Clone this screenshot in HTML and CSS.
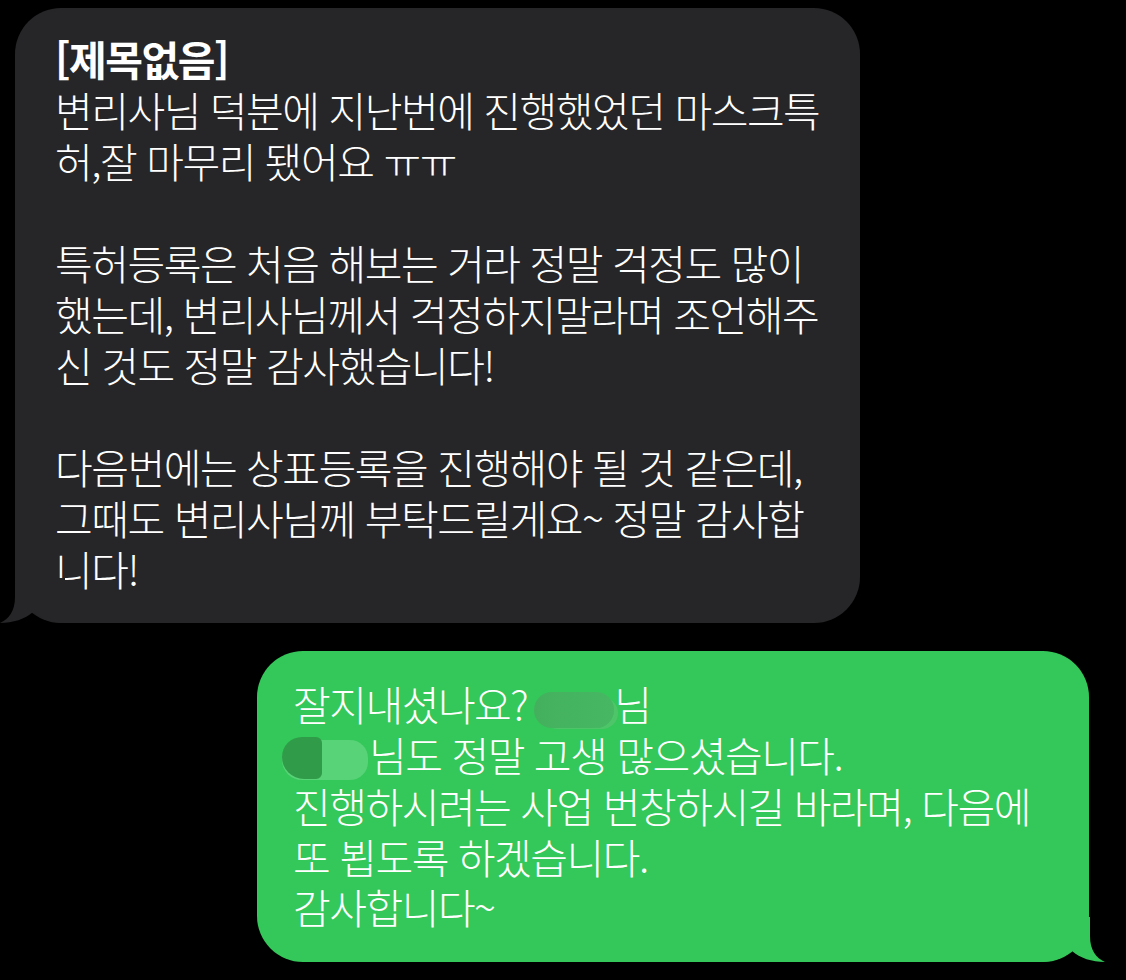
FILE: index.html
```html
<!DOCTYPE html>
<html lang="ko">
<head>
   <meta charset="UTF-8">
   <meta name="viewport" content="width=device-width, initial-scale=1.0">
   <title>메시지</title>
   <link rel="stylesheet" href="styles.css">
</head>

<body>
   <section class="chat">

      <div class="msg msg-in">
         <p class="text">
            <b class="subject">[제목없음]</b><br>
            변리사님 덕분에 지난번에 진행했었던 마스크특<br>
            허,잘 마무리 됐어요 ㅠㅠ<br>
            <br>
            특허등록은 처음 해보는 거라 정말 걱정도 많이<br>
            했는데, 변리사님께서 걱정하지말라며 조언해주<br>
            신 것도 정말 감사했습니다!<br>
            <br>
            다음번에는 상표등록을 진행해야 될 것 같은데,<br>
            그때도 변리사님께 부탁드릴게요~ 정말 감사합<br>
            니다!
         </p>
         <svg class="tail tail-in" viewBox="0 0 70 45" width="70" height="45">
            <path d="M15 0 L15 19 C15 33 9 41 0 45 C13 45 25 41 33 34 C42 41 52 45 65 45 L65 0 Z" />
         </svg>
      </div>

      <div class="msg msg-out">
         <p class="text">
            잘지내셨나요?<span class="blur blur-a"></span>님<br>
            <span class="blur blur-b"><i></i></span>님도 정말 고생 많으셨습니다.<br>
            진행하시려는 사업 번창하시길 바라며, 다음에<br>
            또 뵙도록 하겠습니다.<br>
            감사합니다~
         </p>
         <svg class="tail tail-out" viewBox="0 0 70 45" width="70" height="45">
            <path d="M55 0 L55 19 C55 33 61 41 70 45 C57 45 45 41 37 34 C28 41 18 45 5 45 L5 0 Z" />
         </svg>
      </div>

   </section>
</body>
</html>
```

FILE: styles.css
```css
* {
   box-sizing: border-box;
}

html,
body {
   margin: 0;
   padding: 0;
   background: #000;
}

body {
   font-family: 'Noto Sans CJK KR', 'Noto Sans', sans-serif;
   color: #fff;
}

.chat {
   display: flex;
   flex-direction: column;
   padding-top: 8px;
}

.msg {
   position: relative;
   border-radius: 46px;
}

.msg-in {
   background: #262628;
   width: 845px;
   margin-left: 15px;
   padding: 25px 20px 29px 40px;
}

.msg-out {
   background: #34c759;
   width: 832px;
   margin-left: 257px;
   margin-top: 28px;
   padding: 27px 20px 30px 36px;
}

.text {
   margin: 0;
   font-size: 41px;
   font-weight: 300;
   letter-spacing: -1.5px;
   white-space: nowrap;
}

.msg-in .text {
   line-height: 51px;
}

.msg-out .text {
   line-height: 50.5px;
}

.subject {
   font-weight: 700;
}

/* tails */
.tail {
   position: absolute;
   bottom: 0;
   display: block;
}

.tail-in {
   left: -15px;
   fill: #262628;
}

.tail-out {
   right: -16px;
   fill: #34c759;
}

/* blurred names */
.blur {
   display: inline-block;
   vertical-align: middle;
   border-radius: 18px;
}

.blur-a {
   width: 80px;
   height: 36px;
   margin: 0 0 0 7px;
   background: linear-gradient(90deg, #44b05e 0%, #45b460 45%, #48b763 100%);
   box-shadow: 6px 3px 0 -2px #4fc56a;
}

.blur-b {
   position: relative;
   width: 86px;
   height: 40px;
   margin-left: -11px;
   margin-right: 1px;
   background: #58d377;
   border-radius: 20px 18px 18px 20px;
}

.blur-b i {
   position: absolute;
   left: 0;
   top: -3px;
   width: 40px;
   height: 42px;
   background: #309c49;
   border-radius: 20px 6px 6px 22px;
}
```
